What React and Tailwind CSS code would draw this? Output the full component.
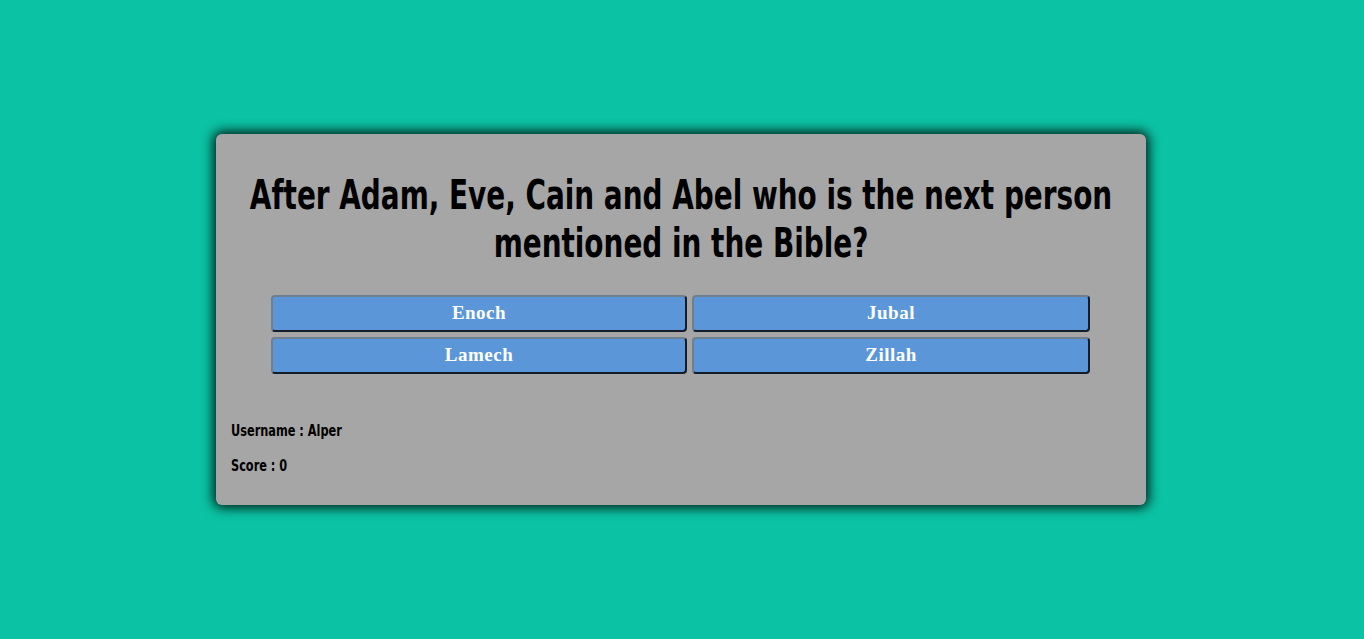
import React from "react";

const impact = { fontFamily: 'Impact, "Liberation Sans Narrow", "DejaVu Sans Condensed", "Arial Narrow", sans-serif' };

const answers = [
  ["Enoch", "Jubal"],
  ["Lamech", "Zillah"],
];

const AnswerButton = ({ label, wide }) => (
  <button
    className={`${wide ? "w-[416px]" : "w-[398px]"} h-[37px] rounded-[4px] bg-[#5b97d8] border-2 border-t-[#6f7f90] border-l-[#6f7f90] border-b-[#141c2a] border-r-[#141c2a] text-white text-[19px] font-bold tracking-[0.5px]`}
    style={{ fontFamily: '"Liberation Serif", "Times New Roman", serif' }}
  >
    {label}
  </button>
);

export default function App() {
  return (
    <div className="min-h-[639px] w-full bg-[#0bc3a4] flex justify-center pt-[134px] pr-[2px]">
      <div className="w-[930px] h-[371px] bg-[#a6a6a6] rounded-[6px] shadow-[0_0_12px_3px_rgba(0,0,0,0.85)] px-[15px] flex flex-col">
        {/* condensed heading, scaled to mimic Impact */}
        <h1 className="flex flex-col items-center text-[40px] leading-[48px] font-bold text-black mt-[37px] scale-x-[0.775] origin-center" style={impact}>
          <span className="whitespace-nowrap">After Adam, Eve, Cain and Abel who is the next person</span>
          <span className="whitespace-nowrap">mentioned in the Bible?</span>
        </h1>
        <div className="mt-[28px] flex flex-col items-center gap-[5px] pr-[1px]">
          {answers.map((row, i) => (
            <div key={i} className="flex gap-[5px]">
              <AnswerButton label={row[0]} wide />
              <AnswerButton label={row[1]} />
            </div>
          ))}
        </div>
        <div className="mt-[39px] text-[16px] font-bold text-black scale-x-[0.787] origin-left" style={impact}>
          <p className="leading-[35px] whitespace-nowrap">Username : Alper</p>
          <p className="leading-[35px] whitespace-nowrap">Score : 0</p>
        </div>
      </div>
    </div>
  );
}
